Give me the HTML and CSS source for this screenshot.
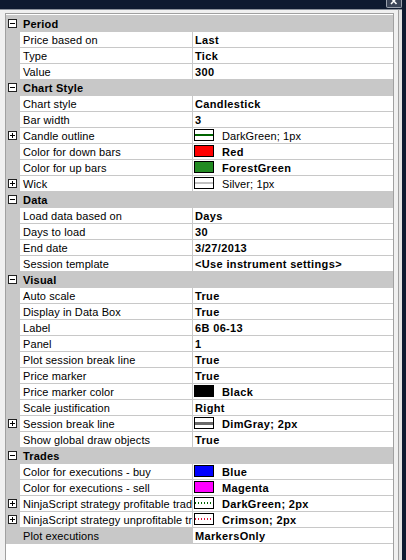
FILE: index.html
```html
<!DOCTYPE html>
<html lang="en">

<head>
    <meta charset="UTF-8">
    <meta name="viewport" content="width=device-width, initial-scale=1.0">
    <title>Chart Properties</title>
    <link rel="stylesheet" href="styles.css">
</head>

<body>
    <div class="window">
        <div class="titlebar">
            <div class="close-button">
                <svg width="8" height="6" viewBox="0 0 8 6">
                    <path d="M1 -2 L6.5 4 M6.5 -2 L1 4" stroke="#fff" stroke-width="1.5" fill="none" />
                </svg>
            </div>
        </div>

        <div class="window-body">
            <div class="pane">
                <div class="property-grid">
                    <div class="rows">
                        <!-- Period -->
                        <div class="category">
                            <div class="gutter"><span class="expander"></span></div>
                            <div class="category-name">Period</div>
                        </div>
                        <div class="property">
                            <div class="gutter"></div>
                            <div class="prop-name">Price based on</div>
                            <div class="prop-value">Last</div>
                        </div>
                        <div class="property">
                            <div class="gutter"></div>
                            <div class="prop-name">Type</div>
                            <div class="prop-value">Tick</div>
                        </div>
                        <div class="property">
                            <div class="gutter"></div>
                            <div class="prop-name">Value</div>
                            <div class="prop-value">300</div>
                        </div>

                        <!-- Chart Style -->
                        <div class="category">
                            <div class="gutter"><span class="expander"></span></div>
                            <div class="category-name">Chart Style</div>
                        </div>
                        <div class="property">
                            <div class="gutter"></div>
                            <div class="prop-name">Chart style</div>
                            <div class="prop-value">Candlestick</div>
                        </div>
                        <div class="property">
                            <div class="gutter"></div>
                            <div class="prop-name">Bar width</div>
                            <div class="prop-value">3</div>
                        </div>
                        <div class="property">
                            <div class="gutter"><span class="expander closed"></span></div>
                            <div class="prop-name">Candle outline</div>
                            <div class="prop-value default"><span class="swatch pen"><span class="pen-line dark-green"></span></span>DarkGreen; 1px</div>
                        </div>
                        <div class="property">
                            <div class="gutter"></div>
                            <div class="prop-name">Color for down bars</div>
                            <div class="prop-value"><span class="swatch red"></span>Red</div>
                        </div>
                        <div class="property">
                            <div class="gutter"></div>
                            <div class="prop-name">Color for up bars</div>
                            <div class="prop-value"><span class="swatch forest-green"></span>ForestGreen</div>
                        </div>
                        <div class="property">
                            <div class="gutter"><span class="expander closed"></span></div>
                            <div class="prop-name">Wick</div>
                            <div class="prop-value default"><span class="swatch pen"><span class="pen-line silver"></span></span>Silver; 1px</div>
                        </div>

                        <!-- Data -->
                        <div class="category">
                            <div class="gutter"><span class="expander"></span></div>
                            <div class="category-name">Data</div>
                        </div>
                        <div class="property">
                            <div class="gutter"></div>
                            <div class="prop-name">Load data based on</div>
                            <div class="prop-value">Days</div>
                        </div>
                        <div class="property">
                            <div class="gutter"></div>
                            <div class="prop-name">Days to load</div>
                            <div class="prop-value">30</div>
                        </div>
                        <div class="property">
                            <div class="gutter"></div>
                            <div class="prop-name">End date</div>
                            <div class="prop-value">3/27/2013</div>
                        </div>
                        <div class="property">
                            <div class="gutter"></div>
                            <div class="prop-name">Session template</div>
                            <div class="prop-value">&lt;Use instrument settings&gt;</div>
                        </div>

                        <!-- Visual -->
                        <div class="category">
                            <div class="gutter"><span class="expander"></span></div>
                            <div class="category-name">Visual</div>
                        </div>
                        <div class="property">
                            <div class="gutter"></div>
                            <div class="prop-name">Auto scale</div>
                            <div class="prop-value">True</div>
                        </div>
                        <div class="property">
                            <div class="gutter"></div>
                            <div class="prop-name">Display in Data Box</div>
                            <div class="prop-value">True</div>
                        </div>
                        <div class="property">
                            <div class="gutter"></div>
                            <div class="prop-name">Label</div>
                            <div class="prop-value">6B 06-13</div>
                        </div>
                        <div class="property">
                            <div class="gutter"></div>
                            <div class="prop-name">Panel</div>
                            <div class="prop-value">1</div>
                        </div>
                        <div class="property">
                            <div class="gutter"></div>
                            <div class="prop-name">Plot session break line</div>
                            <div class="prop-value">True</div>
                        </div>
                        <div class="property">
                            <div class="gutter"></div>
                            <div class="prop-name">Price marker</div>
                            <div class="prop-value">True</div>
                        </div>
                        <div class="property">
                            <div class="gutter"></div>
                            <div class="prop-name">Price marker color</div>
                            <div class="prop-value"><span class="swatch black"></span>Black</div>
                        </div>
                        <div class="property">
                            <div class="gutter"></div>
                            <div class="prop-name">Scale justification</div>
                            <div class="prop-value">Right</div>
                        </div>
                        <div class="property">
                            <div class="gutter"><span class="expander closed"></span></div>
                            <div class="prop-name">Session break line</div>
                            <div class="prop-value"><span class="swatch pen"><span class="pen-line dim-gray"></span></span>DimGray; 2px</div>
                        </div>
                        <div class="property">
                            <div class="gutter"></div>
                            <div class="prop-name">Show global draw objects</div>
                            <div class="prop-value">True</div>
                        </div>

                        <!-- Trades -->
                        <div class="category">
                            <div class="gutter"><span class="expander"></span></div>
                            <div class="category-name">Trades</div>
                        </div>
                        <div class="property">
                            <div class="gutter"></div>
                            <div class="prop-name">Color for executions - buy</div>
                            <div class="prop-value"><span class="swatch blue"></span>Blue</div>
                        </div>
                        <div class="property">
                            <div class="gutter"></div>
                            <div class="prop-name">Color for executions - sell</div>
                            <div class="prop-value"><span class="swatch magenta"></span>Magenta</div>
                        </div>
                        <div class="property">
                            <div class="gutter"><span class="expander closed"></span></div>
                            <div class="prop-name">NinjaScript strategy profitable trades</div>
                            <div class="prop-value"><span class="swatch pen"><span class="pen-line dotted-green"></span></span>DarkGreen; 2px</div>
                        </div>
                        <div class="property">
                            <div class="gutter"><span class="expander closed"></span></div>
                            <div class="prop-name">NinjaScript strategy unprofitable trades</div>
                            <div class="prop-value"><span class="swatch pen"><span class="pen-line dotted-crimson"></span></span>Crimson; 2px</div>
                        </div>
                        <div class="property selected">
                            <div class="gutter"></div>
                            <div class="prop-name">Plot executions</div>
                            <div class="prop-value">MarkersOnly</div>
                        </div>
                    </div>
                </div>
            </div>
            <div class="pane-edge"></div>
            <div class="frame-right"></div>
        </div>
    </div>
</body>

</html>
```

FILE: styles.css
```css
body {
    margin: 0;
    font-family: "Liberation Sans", Arial, sans-serif;
    font-size: 11px;
    color: #000;
    background-color: #f0f0f0;
}

.window {
    display: flex;
    flex-direction: column;
    width: 406px;
    height: 560px;
    overflow: hidden;
}

/* dark window frame along the top */
.titlebar {
    flex: none;
    height: 9px;
    display: flex;
    justify-content: flex-end;
    padding-right: 4px;
    background-color: #0e1a30;
}

.close-button {
    width: 16px;
    height: 8px;
    box-sizing: border-box;
    display: flex;
    justify-content: center;
    background-color: #3b4558;
    border: 1px solid #9aa1ad;
    border-top: none;
    border-radius: 0 0 2px 2px;
}

.window-body {
    flex: 1;
    display: flex;
    min-height: 0;
}

.pane {
    flex: 1;
    display: flex;
    flex-direction: column;
    padding: 3px 4px 0 5px;
    border-top: 1px solid #8c929c;
    border-right: 1px solid #a0a0a0;
    background-color: #f0f0f0;
}

.pane-edge {
    width: 3px;
    border-top: 1px solid #8c929c;
    background-color: #e4e4e4;
}

.frame-right {
    width: 4px;
    background-color: #0e1a30;
}

/* property grid */
.property-grid {
    flex: 1;
    padding-top: 1px;
    background-color: #fff;
    border: 1px solid #a0a0a0;
    border-bottom: none;
}

.rows {
    border-bottom: 1px solid #c8c8c8;
}

.category,
.property {
    display: flex;
    height: 15px;
    border-top: 1px solid #c8c8c8;
}

.category {
    background-color: #c8c8c8;
    font-weight: bold;
}

.gutter {
    flex: none;
    width: 14px;
    box-sizing: border-box;
    padding: 3px 0 0 2px;
    background-color: #c8c8c8;
}

.category-name {
    padding-left: 3px;
    line-height: 16px;
    letter-spacing: 0.2px;
}

.prop-name {
    flex: none;
    width: 172px;
    box-sizing: border-box;
    padding-left: 3px;
    line-height: 16px;
    letter-spacing: 0.1px;
    white-space: nowrap;
    overflow: hidden;
    background-color: #fff;
}

.property.selected .prop-name {
    background-color: #c8c8c8;
}

.prop-value {
    flex: 1;
    min-width: 0;
    display: flex;
    padding-left: 2px;
    border-left: 1px solid #c8c8c8;
    line-height: 16px;
    font-weight: bold;
    letter-spacing: 0.35px;
    white-space: nowrap;
    overflow: hidden;
    background-color: #fff;
}

.prop-value.default {
    font-weight: normal;
    letter-spacing: 0.1px;
}

/* +/- boxes */
.expander {
    display: block;
    position: relative;
    width: 9px;
    height: 9px;
    box-sizing: border-box;
    border: 1px solid #222;
    background-color: #fff;
}

.expander::before {
    content: "";
    position: absolute;
    left: 1px;
    top: 3px;
    width: 5px;
    height: 1px;
    background-color: #000;
}

.expander.closed::after {
    content: "";
    position: absolute;
    left: 3px;
    top: 1px;
    width: 1px;
    height: 5px;
    background-color: #000;
}

/* colour and pen previews */
.swatch {
    flex: none;
    width: 20px;
    height: 12px;
    box-sizing: border-box;
    margin: 1px 8px 0 -1px;
    border: 1px solid #000;
}

.swatch.red { background-color: #ff0000; }
.swatch.forest-green { background-color: #228b22; }
.swatch.black { background-color: #000; }
.swatch.blue { background-color: #0000ff; }
.swatch.magenta { background-color: #ff00ff; }

.swatch.pen {
    display: flex;
    align-items: center;
    background-color: #fff;
}

.pen-line {
    flex: 1;
    height: 2px;
}

.pen-line.dark-green { background-color: #006400; }
.pen-line.silver { background-color: #c0c0c0; }
.pen-line.dim-gray { height: 3px; background-color: #696969; }

.pen-line.dotted-green {
    background: repeating-linear-gradient(90deg, #006400 0 1px, transparent 1px 3px);
}

.pen-line.dotted-crimson {
    background: repeating-linear-gradient(90deg, #dc143c 0 1px, transparent 1px 3px);
}
```
